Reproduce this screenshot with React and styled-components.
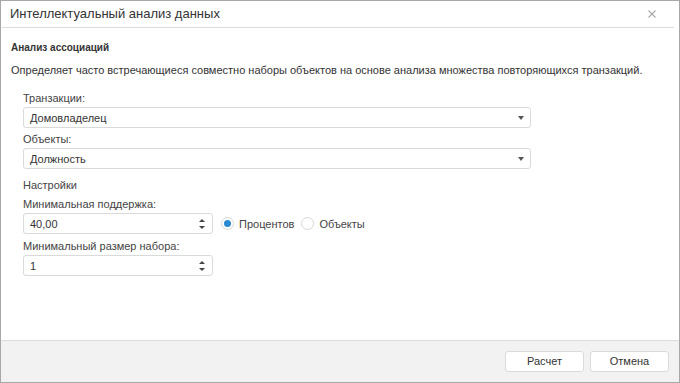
import React from "react";
import styled, { createGlobalStyle } from "styled-components";

const GlobalStyle = createGlobalStyle`
  html, body {
    margin: 0;
    padding: 0;
    background: #fff;
  }
  body {
    font-family: "Liberation Sans", Arial, sans-serif;
    color: #333;
  }
  * { box-sizing: border-box; }
`;

const Window = styled.div`
  width: 680px;
  height: 383px;
  border: 1px solid #a8a8a8;
  display: flex;
  flex-direction: column;
  background: #fff;
`;

const TitleBar = styled.div`
  height: 27px;
  margin: 0 5px 0 1px;
  border-bottom: 1px solid #dcdcdc;
  display: flex;
  align-items: center;
  justify-content: space-between;
  padding: 0 18px 1px 8px;
  flex-shrink: 0;
`;

const Title = styled.div`
  font-size: 13px;
  color: #333;
`;

const CloseIcon = styled.svg`
  width: 8px;
  height: 8px;
  stroke: #a9a9a9;
  stroke-width: 1.1;
  margin-top: 1px;
`;

const Body = styled.div`
  flex: 1;
  padding: 13px 10px 0 10px;
`;

const SectionTitle = styled.div`
  font-size: 10px;
  line-height: 14px;
  font-weight: 700;
  color: #333;
`;

const Description = styled.div`
  font-size: 11px;
  line-height: 14px;
  color: #333;
  margin-top: 8px;
  white-space: nowrap;
`;

const Form = styled.div`
  padding-left: 12px;
  margin-top: 14px;
  display: flex;
  flex-direction: column;
`;

const Label = styled.div`
  font-size: 11px;
  color: #444;
  line-height: 14px;
  margin-top: ${(p) => p.$top || 0}px;
  margin-bottom: 2px;
`;

const Group = styled.div`
  font-size: 11px;
  color: #444;
  line-height: 14px;
  margin-top: 9px;
  margin-bottom: 5px;
`;

const Field = styled.div`
  width: ${(p) => p.$width}px;
  height: 21px;
  border: 1px solid #dadada;
  border-radius: 3px;
  display: flex;
  align-items: center;
  justify-content: space-between;
  padding: 0 6px 0 6px;
  font-size: 11px;
  color: #333;
  background: #fff;
`;

const Caret = styled.span`
  width: 0;
  height: 0;
  border-left: 3.5px solid transparent;
  border-right: 3.5px solid transparent;
  border-top: 4px solid #555;
  margin-right: 0;
`;

const Spin = styled.span`
  display: flex;
  flex-direction: column;
  gap: 4px;
  margin-right: 1px;
`;

const Up = styled.span`
  width: 0;
  height: 0;
  border-left: 3px solid transparent;
  border-right: 3px solid transparent;
  border-bottom: 3px solid #444;
`;

const Down = styled.span`
  width: 0;
  height: 0;
  border-left: 3px solid transparent;
  border-right: 3px solid transparent;
  border-top: 3px solid #444;
`;

const Row = styled.div`
  display: flex;
  align-items: center;
`;

const RadioGroup = styled.div`
  display: flex;
  align-items: center;
  gap: 7px;
  margin-left: 8px;
`;

const RadioItem = styled.label`
  display: flex;
  align-items: center;
  font-size: 11px;
  color: #444;
`;

const RadioCircle = styled.span`
  width: 13px;
  height: 13px;
  border-radius: 50%;
  border: 1px solid #d8d8d8;
  display: inline-flex;
  align-items: center;
  justify-content: center;
  margin-right: 5px;
  background: #fff;

  &::after {
    content: "";
    width: 7px;
    height: 7px;
    border-radius: 50%;
    background: ${(p) => (p.$on ? "#2a8ad4" : "transparent")};
  }
`;

const Footer = styled.div`
  height: 42px;
  flex-shrink: 0;
  border-top: 1px solid #dcdcdc;
  background: #f2f2f2;
  display: flex;
  align-items: center;
  justify-content: flex-end;
  gap: 6px;
  padding: 0 10px 1px 0;
`;

const Button = styled.button`
  width: 79px;
  height: 21px;
  border: 1px solid #dadada;
  border-radius: 3px;
  background: #fff;
  font-family: inherit;
  font-size: 11px;
  color: #333;
  padding: 0;
`;

const Select = ({ value }) => (
  <Field $width={508}>
    <span>{value}</span>
    <Caret />
  </Field>
);

const Spinner = ({ value }) => (
  <Field $width={190}>
    <span>{value}</span>
    <Spin>
      <Up />
      <Down />
    </Spin>
  </Field>
);

export default function App() {
  return (
    <>
      <GlobalStyle />
      <Window>
        <TitleBar>
          <Title>Интеллектуальный анализ данных</Title>
          <CloseIcon viewBox="0 0 8 8">
            <path d="M0.5 0.5 L7.5 7.5 M7.5 0.5 L0.5 7.5" />
          </CloseIcon>
        </TitleBar>
        <Body>
          <SectionTitle>Анализ ассоциаций</SectionTitle>
          <Description>
            Определяет часто встречающиеся совместно наборы объектов на основе анализа множества повторяющихся транзакций.
          </Description>
          <Form>
            <Label>Транзакции:</Label>
            <Select value="Домовладелец" />
            <Label $top={4}>Объекты:</Label>
            <Select value="Должность" />
            <Group>Настройки</Group>
            <Label>Минимальная поддержка:</Label>
            <Row>
              <Spinner value="40,00" />
              <RadioGroup>
                <RadioItem>
                  <RadioCircle $on />
                  Процентов
                </RadioItem>
                <RadioItem>
                  <RadioCircle />
                  Объекты
                </RadioItem>
              </RadioGroup>
            </Row>
            <Label $top={5}>Минимальный размер набора:</Label>
            <Spinner value="1" />
          </Form>
        </Body>
        <Footer>
          <Button>Расчет</Button>
          <Button>Отмена</Button>
        </Footer>
      </Window>
    </>
  );
}
